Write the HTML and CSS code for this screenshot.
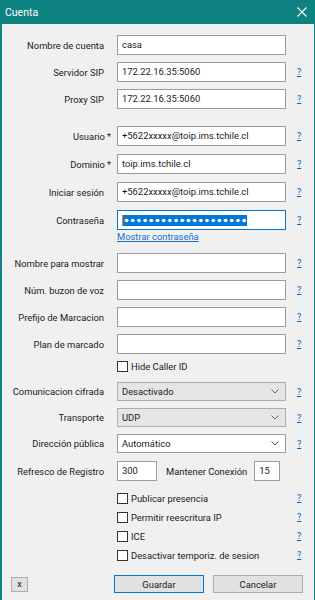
FILE: index.html
```html
<!DOCTYPE html>
<html lang="es">
<head>
    <meta charset="UTF-8">
    <meta name="viewport" content="width=device-width, initial-scale=1.0">
    <title>Cuenta</title>
    <link rel="stylesheet" href="styles.css">
</head>
<body>
    <div class="window">
        <div class="titlebar">
            <span class="title">Cuenta</span>
            <svg class="close" width="10" height="10" viewBox="0 0 10 10">
                <path d="M0.5 0.5 L9.5 9.5 M9.5 0.5 L0.5 9.5" stroke="#fff" stroke-width="1.1" fill="none"/>
            </svg>
        </div>
        <div class="content">
            <div class="group">
                <div class="row">
                    <span class="lbl">Nombre de cuenta</span>
                    <div class="field">casa</div>
                </div>
                <div class="row">
                    <span class="lbl">Servidor SIP</span>
                    <div class="field">172.22.16.35:5060</div>
                    <a class="help" href="#">?</a>
                </div>
                <div class="row">
                    <span class="lbl">Proxy SIP</span>
                    <div class="field">172.22.16.35:5060</div>
                    <a class="help" href="#">?</a>
                </div>
            </div>

            <div class="group g-user">
                <div class="row">
                    <span class="lbl">Usuario<span class="req">*</span></span>
                    <div class="field">+5622xxxxx@toip.ims.tchile.cl</div>
                    <a class="help" href="#">?</a>
                </div>
                <div class="row">
                    <span class="lbl">Dominio<span class="req">*</span></span>
                    <div class="field">toip.ims.tchile.cl</div>
                    <a class="help" href="#">?</a>
                </div>
                <div class="row">
                    <span class="lbl">Iniciar sesión</span>
                    <div class="field">+5622xxxxx@toip.ims.tchile.cl</div>
                    <a class="help" href="#">?</a>
                </div>
                <div class="row">
                    <span class="lbl">Contraseña</span>
                    <div class="field focus"><span class="pass"></span></div>
                    <a class="help" href="#">?</a>
                </div>
            </div>
            <div class="link-row">
                <a class="link" href="#">Mostrar contraseña</a>
            </div>

            <div class="group g-extra">
                <div class="row">
                    <span class="lbl">Nombre para mostrar</span>
                    <div class="field"></div>
                    <a class="help" href="#">?</a>
                </div>
                <div class="row">
                    <span class="lbl">Núm. buzon de voz</span>
                    <div class="field"></div>
                    <a class="help" href="#">?</a>
                </div>
                <div class="row">
                    <span class="lbl">Prefijo de Marcacion</span>
                    <div class="field"></div>
                    <a class="help" href="#">?</a>
                </div>
                <div class="row">
                    <span class="lbl">Plan de marcado</span>
                    <div class="field"></div>
                    <a class="help" href="#">?</a>
                </div>
            </div>
            <div class="row chk-row hide-id">
                <span class="lbl"></span>
                <label class="check"><span class="box"></span>Hide Caller ID</label>
            </div>

            <div class="group g-net">
                <div class="row sel-row">
                    <span class="lbl">Comunicacion cifrada</span>
                    <div class="select">Desactivado<svg class="chev" width="8" height="5" viewBox="0 0 8 5"><path d="M0.5 0.5 L4 4 L7.5 0.5" stroke="#666" fill="none"/></svg></div>
                    <a class="help" href="#">?</a>
                </div>
                <div class="row sel-row">
                    <span class="lbl">Transporte</span>
                    <div class="select">UDP<svg class="chev" width="8" height="5" viewBox="0 0 8 5"><path d="M0.5 0.5 L4 4 L7.5 0.5" stroke="#666" fill="none"/></svg></div>
                    <a class="help" href="#">?</a>
                </div>
                <div class="row sel-row">
                    <span class="lbl">Dirección pública</span>
                    <div class="select white">Automático<svg class="chev" width="8" height="5" viewBox="0 0 8 5"><path d="M0.5 0.5 L4 4 L7.5 0.5" stroke="#555" fill="none"/></svg></div>
                    <a class="help" href="#">?</a>
                </div>
                <div class="row reg-row">
                    <span class="lbl">Refresco de Registro</span>
                    <div class="field small">300</div>
                    <span class="keep">Mantener Conexión</span>
                    <div class="field tiny">15</div>
                </div>
            </div>

            <div class="group g-checks">
                <div class="row chk-row">
                    <span class="lbl"></span>
                    <label class="check"><span class="box"></span>Publicar presencia</label>
                    <a class="help" href="#">?</a>
                </div>
                <div class="row chk-row">
                    <span class="lbl"></span>
                    <label class="check"><span class="box"></span>Permitir reescritura IP</label>
                    <a class="help" href="#">?</a>
                </div>
                <div class="row chk-row">
                    <span class="lbl"></span>
                    <label class="check"><span class="box"></span>ICE</label>
                    <a class="help" href="#">?</a>
                </div>
                <div class="row chk-row">
                    <span class="lbl"></span>
                    <label class="check"><span class="box"></span>Desactivar temporiz. de sesion</label>
                    <a class="help" href="#">?</a>
                </div>
            </div>

            <div class="footer">
                <button class="btn btn-x">x</button>
                <div class="actions">
                    <button class="btn default">Guardar</button>
                    <button class="btn">Cancelar</button>
                </div>
            </div>
        </div>
    </div>
</body>
</html>
```

FILE: styles.css
```css
* {
    box-sizing: border-box;
}
body {
    margin: 0;
    font-family: Roboto, 'Liberation Sans', sans-serif;
    font-size: 9.4px;
    color: #1a1a1a;
    background-color: #f0f0f0;
}
.window {
    width: 315px;
    height: 600px;
    display: flex;
    flex-direction: column;
    overflow: hidden;
}
.titlebar {
    height: 24px;
    flex-shrink: 0;
    display: flex;
    align-items: center;
    justify-content: space-between;
    padding: 0 8px 0 5px;
    background-color: #0f8282;
    color: #ffffff;
    font-size: 10.5px;
}
.close {
    display: block;
    margin-top: -1px;
}
.content {
    flex: 1;
    background-color: #f0f0f0;
    border-left: 2px solid #0f8282;
    border-right: 1px solid #0f8282;
    padding-top: 11px;
}
.group {
    display: flex;
    flex-direction: column;
    gap: 7px;
}
.row {
    display: flex;
    align-items: center;
    height: 20px;
}
.lbl {
    width: 102px;
    flex-shrink: 0;
    text-align: right;
    white-space: nowrap;
}
.req {
    margin-left: 2px;
    margin-right: -7px;
}
.field {
    width: 169px;
    height: 20px;
    margin-left: 13px;
    padding: 0 4px;
    line-height: 18px;
    background-color: #ffffff;
    border: 1px solid #9c9c9c;
    white-space: nowrap;
    overflow: hidden;
}
.field.focus {
    border-color: #0078d7;
    display: flex;
    align-items: center;
}
.pass {
    display: block;
    width: 125px;
    height: 11px;
    border-left: 1px solid #f0781e;
    background-color: #0078d7;
    background-image: radial-gradient(circle, #ffffff 1.6px, transparent 2.1px);
    background-size: 6.2px 11px;
    background-position: 0.5px 0;
}
.help {
    margin-left: 11px;
    color: #0066cc;
    font-size: 9px;
    text-decoration: underline;
}
.g-user {
    margin-top: 17px;
    gap: 8px;
}
.link-row {
    height: 12px;
    margin-top: 1px;
    padding-left: 115px;
    line-height: 12px;
}
.link {
    color: #1a6fcc;
    text-decoration: underline;
}
.g-extra {
    margin-top: 10px;
}
.chk-row {
    height: 12px;
}
.hide-id {
    margin-top: 6px;
}
.check {
    width: 169px;
    margin-left: 13px;
    display: flex;
    align-items: center;
    white-space: nowrap;
}
.box {
    width: 11px;
    height: 11px;
    margin-right: 3px;
    background-color: #ffffff;
    border: 1px solid #333333;
}
.g-net {
    margin-top: 10px;
}
.sel-row {
    height: 19px;
}
.select {
    width: 169px;
    height: 19px;
    margin-left: 13px;
    padding: 0 6px 0 4px;
    display: flex;
    align-items: center;
    justify-content: space-between;
    background-color: #e5e5e5;
    border: 1px solid #acacac;
}
.select.white {
    background-color: #ffffff;
    border-color: #9c9c9c;
}
.reg-row {
    margin-top: 1px;
}
.field.small {
    width: 40px;
}
.keep {
    margin-left: 9px;
    white-space: nowrap;
}
.field.tiny {
    width: 26px;
    margin-left: 7px;
}
.g-checks {
    margin-top: 11px;
}
.footer {
    margin-top: 14px;
    padding-left: 9px;
    display: flex;
    align-items: center;
}
.actions {
    margin-left: 86px;
    display: flex;
    gap: 9px;
}
.btn {
    height: 18px;
    width: 90px;
    padding: 0;
    font-family: Roboto, 'Liberation Sans', sans-serif;
    font-size: 9.4px;
    color: #1a1a1a;
    background-color: #e1e1e1;
    border: 1px solid #adadad;
}
.btn.default {
    border-color: #0078d7;
}
.btn-x {
    width: 17px;
    height: 15px;
    font-size: 9px;
}
```
